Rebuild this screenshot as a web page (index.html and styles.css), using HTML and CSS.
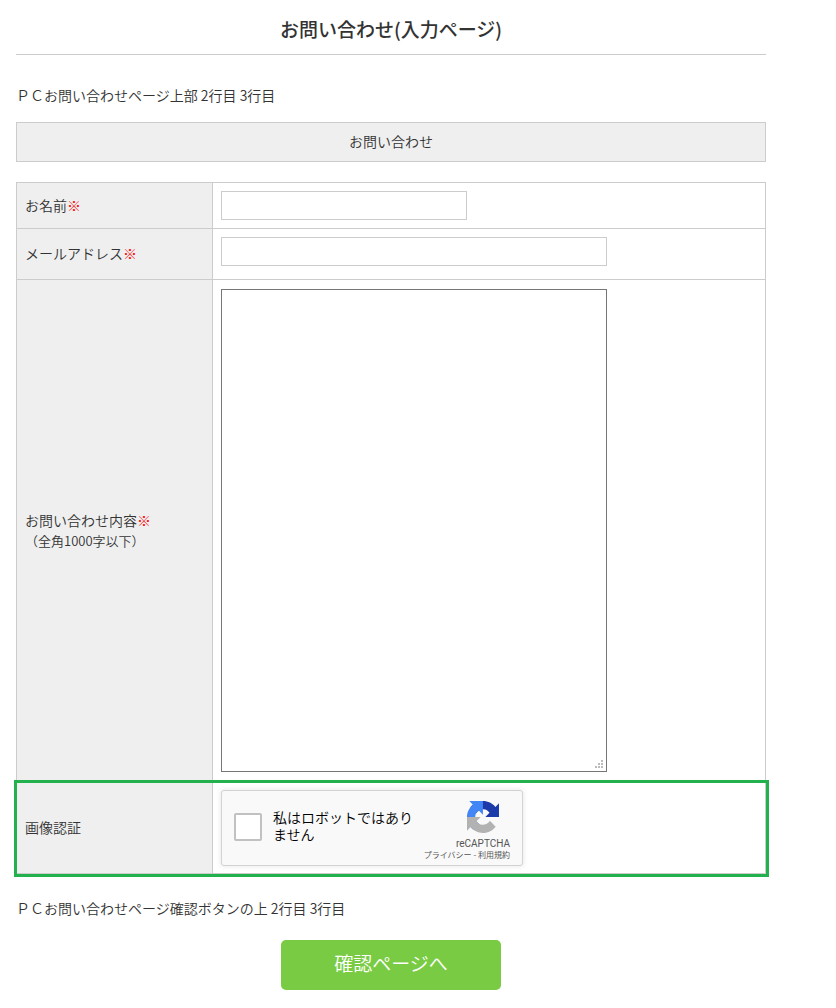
FILE: index.html
```html
<!DOCTYPE html>
<html lang="ja">
<head>
  <meta charset="UTF-8">
  <title>お問い合わせ(入力ページ)</title>
  <link rel="stylesheet" href="styles.css">
</head>
<body>

  <div class="container">
    <h1 class="page-title">お問い合わせ(入力ページ)</h1>

    <p class="note">ＰＣお問い合わせページ上部 2行目 3行目</p>

    <h2 class="form-title">お問い合わせ</h2>

    <form action="/contact/confirm" method="POST">
      <table class="form-table">
        <tr>
          <th><label for="name">お名前<span class="required">※</span></label></th>
          <td><input type="text" class="input-box" name="name" id="name"></td>
        </tr>
        <tr>
          <th><label for="email">メールアドレス<span class="required">※</span></label></th>
          <td class="email-cell"><input type="text" class="input-box input-long" name="email" id="email"></td>
        </tr>
        <tr>
          <th>
            <label for="message">お問い合わせ内容<span class="required">※</span><br><span class="small">（全角1000字以下）</span></label>
          </th>
          <td><textarea class="message-box" name="message" id="message"></textarea></td>
        </tr>
        <tr class="captcha-row">
          <th>画像認証</th>
          <td>
            <div class="captcha">
              <input type="checkbox" class="captcha-check" name="robot" id="robot">
              <label class="captcha-label" for="robot">私はロボットではありません</label>
              <div class="captcha-brand">
                <svg class="captcha-logo" viewBox="0 0 64 64" aria-hidden="true">
                  <path fill="#1c3aa9" d="M64 31.955l-.033-1.37V4.687l-7.16 7.16C50.948 4.674 42.033.093 32.05.093c-10.4 0-19.622 4.96-25.458 12.64l11.736 11.86a15.55 15.55 0 0 1 4.754-5.334c2.05-1.6 4.952-2.906 8.968-2.906.485 0 .86.057 1.135.163 4.976.393 9.288 3.14 11.828 7.124l-8.307 8.307L64 31.953"/>
                  <path fill="#4285f4" d="M31.862.094l-1.37.033H4.594l7.16 7.16C4.58 13.147 0 22.06 0 32.046c0 10.4 4.96 19.622 12.64 25.458L24.5 45.768a15.55 15.55 0 0 1-5.334-4.754c-1.6-2.05-2.906-4.952-2.906-8.968 0-.485.057-.86.163-1.135.393-4.976 3.14-9.288 7.124-11.828l8.307 8.307L31.86.095"/>
                  <path fill="#b2b2b2" d="M.001 32.045l.033 1.37v25.898l7.16-7.16c5.86 7.173 14.774 11.754 24.76 11.754 10.4 0 19.622-4.96 25.458-12.64l-11.736-11.86a15.55 15.55 0 0 1-4.754 5.334c-2.05 1.6-4.952 2.906-8.968 2.906-.485 0-.86-.057-1.135-.163-4.976-.393-9.288-3.14-11.828-7.124l8.307-8.307c-10.522.04-22.4.066-27.295-.005"/>
                </svg>
                <span class="captcha-name">reCAPTCHA</span>
                <span class="captcha-links"><a href="#">プライバシー</a> - <a href="#">利用規約</a></span>
              </div>
            </div>
          </td>
        </tr>
      </table>

      <p class="note">ＰＣお問い合わせページ確認ボタンの上 2行目 3行目</p>

      <div class="form-buttons">
        <button type="submit">確認ページへ</button>
      </div>
    </form>
  </div>

</body>
</html>
```
FILE: styles.css
```css
* {
  box-sizing: border-box;
}

body {
  margin: 0;
  font-family: "Noto Sans CJK JP", sans-serif;
  font-size: 14px;
  font-weight: 350;
  line-height: 20px;
  color: #333;
  background-color: #fff;
}

.container {
  margin: 0 70px 0 16px;
}

.page-title {
  margin: 0;
  padding: 14px 0 10px;
  border-bottom: 1px solid #ccc;
  font-size: 19px;
  font-weight: 500;
  line-height: 30px;
  text-align: center;
}

.note {
  margin: 0;
  padding: 30px 0 17px;
}

.form-title {
  margin: 0 0 20px;
  padding: 8px 8px 10px;
  border: 1px solid #ccc;
  background-color: #efefef;
  font-size: 14px;
  font-weight: inherit;
  text-align: center;
}

.form-table {
  width: 100%;
  border-collapse: collapse;
}

.form-table th,
.form-table td {
  padding: 8px;
  border: 1px solid #ccc;
  text-align: left;
  vertical-align: middle;
}

.form-table th {
  width: 196px;
  padding-bottom: 10px;
  background-color: #efefef;
  font-weight: inherit;
}

.form-table .email-cell {
  padding-bottom: 13px;
}

.required {
  color: #f00;
}

.small {
  font-size: 13px;
}

.input-box {
  display: block;
  width: 246px;
  height: 29px;
  padding: 4px;
  border: 1px solid #ccc;
  font: inherit;
}

.input-long {
  width: 386px;
}

.message-box {
  display: block;
  width: 386px;
  height: 483px;
  margin: 1px 0 2px;
  padding: 4px;
  border: 1px solid #767676;
  font: inherit;
}

/* dotted resize grip */
.message-box::-webkit-resizer {
  background-image: url("data:image/svg+xml,%3Csvg xmlns='http://www.w3.org/2000/svg' width='12' height='12' fill='%23bbb'%3E%3Cpath d='M7 1h2v2H7zM4 4h2v2H4zM7 4h2v2H7zM1 7h2v2H1zM4 7h2v2H4zM7 7h2v2H7z'/%3E%3C/svg%3E");
  background-repeat: no-repeat;
  background-position: right bottom;
}

.captcha-row {
  outline: 3px solid #22b14c;
}

.form-table .captcha-row td {
  padding: 7px 8px;
}

.captcha {
  display: flex;
  align-items: center;
  width: 302px;
  height: 76px;
  padding: 0 12px;
  border: 1px solid #d3d3d3;
  border-radius: 3px;
  background-color: #f9f9f9;
  box-shadow: 0 0 4px 1px rgba(0, 0, 0, 0.08);
}

.captcha-check {
  appearance: none;
  flex: none;
  width: 28px;
  height: 28px;
  margin: 0 11px 2px 0;
  border: 2px solid #c1c1c1;
  border-radius: 2px;
  background-color: #fff;
}

.captcha-label {
  flex: none;
  width: 145px;
  padding-bottom: 4px;
  line-height: 17px;
  color: #000;
}

.captcha-brand {
  flex: 1;
  display: flex;
  flex-direction: column;
  align-items: flex-end;
  padding-top: 4px;
  color: #555;
  font-weight: 400;
  white-space: nowrap;
}

.captcha-logo {
  width: 32px;
  height: 32px;
  margin-right: 11px;
}

.captcha-name {
  margin-top: 5px;
  font-family: Roboto, sans-serif;
  font-size: 10px;
  line-height: 12px;
}

.captcha-links {
  font-size: 8px;
  line-height: 10px;
}

.captcha-links a {
  color: inherit;
  text-decoration: none;
}

.form-table + .note {
  padding-top: 24px;
  padding-bottom: 22px;
}

.form-buttons {
  display: flex;
  justify-content: center;
  padding-bottom: 16px;
}

.form-buttons button {
  width: 220px;
  height: 50px;
  padding: 0 0 6px;
  border: none;
  border-radius: 5px;
  background-color: #7acb44;
  color: #fff;
  font-family: inherit;
  font-size: 19px;
  font-weight: 350;
  cursor: pointer;
}
```
